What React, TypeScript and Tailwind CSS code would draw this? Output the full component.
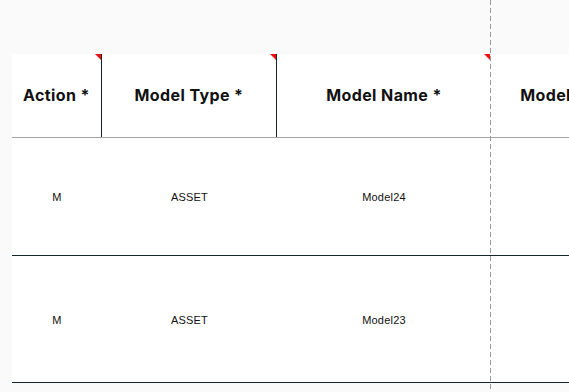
import React from "react";

const cols = [
  { label: "Action *", w: "w-[90px]" },
  { label: "Model Type *", w: "w-[175px]" },
  { label: "Model Name *", w: "w-[214px]" },
  { label: "Model Description", w: "w-[208px]" },
];

const rows = [
  { h: "h-[118px]", cells: ["M", "ASSET", "Model24", ""] },
  { h: "h-[127px]", cells: ["M", "ASSET", "Model23", ""] },
];

export default function App() {
  return (
    <div className="relative w-[569px] h-[392px] overflow-hidden bg-[#fafafa] pt-[54px] pl-[12px]">
      <div className="w-[700px] bg-white flex flex-col">
        <div className="flex h-[84px] border-b border-[#a3a3a3]">
          {cols.map((c, i) => (
            <div
              key={i}
              className={`${c.w} shrink-0 relative flex items-center justify-center ${i < 2 ? "border-r border-[#12262a]" : ""}`}
              style={{ fontFamily: "Inter, 'Liberation Sans', sans-serif" }}
            >
              {i < 3 && (
                <div className={`absolute top-0 ${i < 2 ? "right-0" : "right-[1px]"} w-0 h-0 border-t-[6px] border-t-[#ee1111] border-l-[6px] border-l-transparent`} />
              )}
              <span className="text-[16px] font-bold tracking-[0.4px] text-[#111] whitespace-nowrap pb-[1px]">{c.label}</span>
            </div>
          ))}
        </div>
        {rows.map((r, ri) => (
          <div key={ri} className={`flex ${r.h} border-b border-[#12262a]`}>
            {r.cells.map((t, ci) => (
              <div
                key={ci}
                className={`${cols[ci].w} shrink-0 flex items-center justify-center pt-[2px] text-[11px] tracking-[0.2px] text-[#111]`}
                style={{ fontFamily: "'Liberation Sans', Arial, sans-serif" }}
              >
                {t}
              </div>
            ))}
          </div>
        ))}
      </div>
      <div className="absolute top-0 bottom-0 left-[490px] w-[1px] bg-[repeating-linear-gradient(to_bottom,#9a9a9a_0px,#9a9a9a_5px,transparent_5px,transparent_8px)]" />
    </div>
  );
}
